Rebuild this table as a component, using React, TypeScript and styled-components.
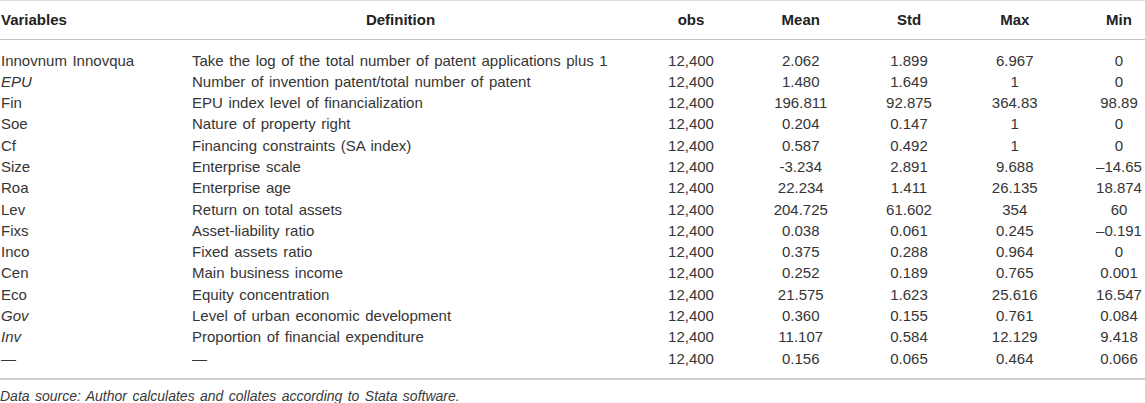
import React from "react";
import styled, { createGlobalStyle } from "styled-components";

const Global = createGlobalStyle`
  html, body { margin: 0; padding: 0; background: #fff; }
  body { font-family: "Liberation Sans", Arial, Helvetica, sans-serif; color: #333; }
`;

const Wrap = styled.div`
  width: 1145px;
  border-top: 1px solid #dedede;
`;

const Table = styled.table`
  width: 1145px;
  table-layout: fixed;
  border-collapse: collapse;
  font-size: 15px;
  word-spacing: 1.4px;
`;

const HeadRow = styled.tr`
  height: 38px;
  border-bottom: 1px solid #c4c4c4;
`;

type Align = "left" | "center";

const Th = styled.th<{ $align: Align; $pl?: number; $pr?: number }>`
  text-align: ${(p) => p.$align};
  padding: 0 ${(p) => p.$pr ?? 0}px 0 ${(p) => p.$pl ?? 0}px;
  font-weight: bold;
  color: #222;
  vertical-align: middle;
  white-space: nowrap;
`;

const Row = styled.tr<{ $last?: boolean }>`
  ${(p) => (p.$last ? "border-bottom: 2px solid #d2d2d2;" : "")}
`;

const Td = styled.td<{ $align: Align; $pl?: number; $italic?: boolean; $first?: boolean; $last?: boolean }>`
  text-align: ${(p) => p.$align};
  padding: ${(p) => (p.$first ? 10 : 0)}px 0 ${(p) => (p.$last ? 9 : 0)}px ${(p) => p.$pl ?? 0}px;
  font-style: ${(p) => (p.$italic ? "italic" : "normal")};
  line-height: 21.3px;
  white-space: nowrap;
  vertical-align: middle;
  color: #353535;
`;

const Note = styled.div`
  font-style: italic;
  font-size: 14px;
  word-spacing: 1.5px;
  color: #3a3a3a;
  padding-top: 8px;
`;

type RowData = [string, boolean, string, string, string, string, string, string];

const rows: RowData[] = [
  ["Innovnum Innovqua", false, "Take the log of the total number of patent applications plus 1", "12,400", "2.062", "1.899", "6.967", "0"],
  ["EPU", true, "Number of invention patent/total number of patent", "12,400", "1.480", "1.649", "1", "0"],
  ["Fin", false, "EPU index level of financialization", "12,400", "196.811", "92.875", "364.83", "98.89"],
  ["Soe", false, "Nature of property right", "12,400", "0.204", "0.147", "1", "0"],
  ["Cf", false, "Financing constraints (SA index)", "12,400", "0.587", "0.492", "1", "0"],
  ["Size", false, "Enterprise scale", "12,400", "-3.234", "2.891", "9.688", "\u201314.65"],
  ["Roa", false, "Enterprise age", "12,400", "22.234", "1.411", "26.135", "18.874"],
  ["Lev", false, "Return on total assets", "12,400", "204.725", "61.602", "354", "60"],
  ["Fixs", false, "Asset-liability ratio", "12,400", "0.038", "0.061", "0.245", "\u20130.191"],
  ["Inco", false, "Fixed assets ratio", "12,400", "0.375", "0.288", "0.964", "0"],
  ["Cen", false, "Main business income", "12,400", "0.252", "0.189", "0.765", "0.001"],
  ["Eco", false, "Equity concentration", "12,400", "21.575", "1.623", "25.616", "16.547"],
  ["Gov", true, "Level of urban economic development", "12,400", "0.360", "0.155", "0.761", "0.084"],
  ["Inv", true, "Proportion of financial expenditure", "12,400", "11.107", "0.584", "12.129", "9.418"],
  ["\u2014", false, "\u2014", "12,400", "0.156", "0.065", "0.464", "0.066"],
];

const widths = [187, 449, 110, 109.5, 107, 104.5, 78];

export default function App() {
  return (
    <>
      <Global />
      <Wrap>
        <Table>
          <colgroup>
            {widths.map((w, i) => (
              <col key={i} style={{ width: w }} />
            ))}
          </colgroup>
          <thead>
            <HeadRow>
              <Th $align="left" $pl={1}>Variables</Th>
              <Th $align="center" $pr={22}>Definition</Th>
              <Th $align="center">obs</Th>
              <Th $align="center">Mean</Th>
              <Th $align="center">Std</Th>
              <Th $align="center">Max</Th>
              <Th $align="center" $pl={26}>Min</Th>
            </HeadRow>
          </thead>
          <tbody>
            {rows.map((r, i) => {
              const first = i === 0;
              const last = i === rows.length - 1;
              return (
                <Row key={i} $last={last}>
                  <Td $align="left" $pl={1} $italic={r[1]} $first={first} $last={last}>{r[0]}</Td>
                  <Td $align="left" $pl={5} $first={first} $last={last}>{r[2]}</Td>
                  <Td $align="center" $first={first} $last={last}>{r[3]}</Td>
                  <Td $align="center" $first={first} $last={last}>{r[4]}</Td>
                  <Td $align="center" $first={first} $last={last}>{r[5]}</Td>
                  <Td $align="center" $first={first} $last={last}>{r[6]}</Td>
                  <Td $align="center" $pl={26} $first={first} $last={last}>{r[7]}</Td>
                </Row>
              );
            })}
          </tbody>
        </Table>
        <Note>Data source: Author calculates and collates according to Stata software.</Note>
      </Wrap>
    </>
  );
}
